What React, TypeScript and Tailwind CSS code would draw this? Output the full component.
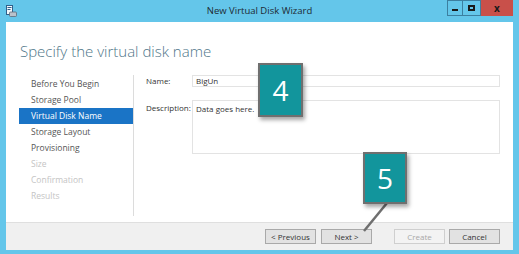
import React from "react";

const steps = [
  { label: "Before You Begin", state: "done" },
  { label: "Storage Pool", state: "done" },
  { label: "Virtual Disk Name", state: "active" },
  { label: "Storage Layout", state: "done" },
  { label: "Provisioning", state: "done" },
  { label: "Size", state: "off" },
  { label: "Confirmation", state: "off" },
  { label: "Results", state: "off" },
];

function AppIcon() {
  return (
    <svg width="11" height="12" viewBox="0 0 11 12" aria-hidden="true">
      <rect x="0.5" y="0.5" width="6" height="9" fill="#f4f8fb" stroke="#2f5f8a" />
      <rect x="1.5" y="2" width="4" height="1" fill="#2f5f8a" />
      <rect x="1.5" y="4" width="3" height="1" fill="#2f5f8a" />
      <rect x="3.5" y="7" width="7" height="4.5" rx="1" fill="#b9c2cc" stroke="#5d6a78" strokeWidth="0.8" />
    </svg>
  );
}

function Callout({ n, className }: { n: string; className: string }) {
  return (
    <div
      className={`absolute flex items-center justify-center border-2 border-[#6f6f6f] bg-[#12959c] text-[28px] leading-none text-white shadow-[2px_3px_4px_rgba(0,0,0,0.35)] ${className}`}
    >
      {n}
    </div>
  );
}

function Btn({ children, disabled }: { children: React.ReactNode; disabled?: boolean }) {
  return (
    <button
      className={
        disabled
          ? "h-[15px] w-[51px] border border-[#cfcfcf] bg-[#f3f3f3] text-[8px] leading-none text-[#a8a8a8]"
          : "h-[15px] w-[51px] border border-[#a9a9a9] bg-[#e2e2e2] text-[8px] leading-none text-[#333]"
      }
    >
      {children}
    </button>
  );
}

export default function App() {
  return (
    <div
      className="relative flex h-[254px] w-[519px] flex-col bg-[#64c6ea] pb-[4px]"
      style={{ fontFamily: '"Open Sans", "Noto Sans", sans-serif' }}
    >
      {/* title bar */}
      <div className="relative flex h-[22px] shrink-0 items-center justify-center">
        <div className="absolute top-[5px] left-[6px]">
          <AppIcon />
        </div>
        <span className="text-[9.5px] text-[#1d2a33]">New Virtual Disk Wizard</span>
        <div className="absolute top-0 right-[6px] flex h-[16px]">
          <div className="flex w-[16px] items-end justify-center border border-[#3c7fa0] pb-[4px]">
            <div className="h-[2px] w-[6px] bg-[#1a1a1a]" />
          </div>
          <div className="flex w-[18px] items-center justify-center border-y border-r border-[#3c7fa0]">
            <div className="h-[6px] w-[7px] border-2 border-[#1a1a1a]" />
          </div>
          <div className="flex w-[32px] items-center justify-center bg-[#c9504a] text-[10px] leading-none font-bold text-[#1a1a1a]">
            x
          </div>
        </div>
      </div>

      <div className="mx-[6px] flex flex-1 flex-col">
        {/* content */}
        <div className="flex flex-1 flex-col bg-white">
          <h1 className="pt-[17px] pl-[14px] text-[15px] leading-[24px] font-light text-[#4f7689]">
            Specify the virtual disk name
          </h1>
          <div className="mt-[12px] flex h-[141px]">
            <nav className="w-[128px] border-r border-[#dcdcdc] pt-[1px] pl-[13px]">
              {steps.map((s) => (
                <div
                  key={s.label}
                  className={
                    s.state === "active"
                      ? "h-[16px] w-[114px] bg-[#1a74c6] pl-[12px] text-[8.5px] leading-[16px] text-white"
                      : s.state === "off"
                        ? "h-[16px] w-[114px] pl-[12px] text-[8.5px] leading-[16px] text-[#c4c4c4]"
                        : "h-[16px] w-[114px] pl-[12px] text-[8.5px] leading-[16px] text-[#555]"
                  }
                >
                  {s.label}
                </div>
              ))}
            </nav>
            <div className="flex flex-1 flex-col pr-[13px] pl-[12px] text-[8px] text-[#333]">
              <div className="flex h-[12px] items-center">
                <span className="w-[46px]">Name:</span>
                <div className="flex h-[12px] flex-1 items-center border border-[#e3e3e3] pl-[3px]">BigUn</div>
              </div>
              <div className="mt-[13px] flex">
                <span className="w-[46px] pt-[2px]">Description:</span>
                <div className="h-[54px] flex-1 border border-[#e3e3e3] pt-[2px] pl-[3px]">Data goes here.</div>
              </div>
            </div>
          </div>
        </div>

        {/* footer */}
        <div className="flex h-[28px] shrink-0 items-center justify-end border-t border-[#dfdfdf] bg-[#f0f0f0] pr-[13px]">
          <div className="flex gap-[5px]">
            <Btn>&lt; Previous</Btn>
            <Btn>Next &gt;</Btn>
          </div>
          <div className="ml-[22px] flex gap-[4px]">
            <Btn disabled>Create</Btn>
            <Btn>Cancel</Btn>
          </div>
        </div>
      </div>

      {/* callouts */}
      <svg className="absolute top-0 left-0" width="519" height="254" aria-hidden="true">
        <line x1="387" y1="203" x2="364" y2="231" stroke="#6f6f6f" strokeWidth="2.5" />
      </svg>
      <Callout n="4" className="top-[63px] left-[258px] h-[54px] w-[45px]" />
      <Callout n="5" className="top-[152px] left-[363px] h-[52px] w-[44px]" />
    </div>
  );
}
